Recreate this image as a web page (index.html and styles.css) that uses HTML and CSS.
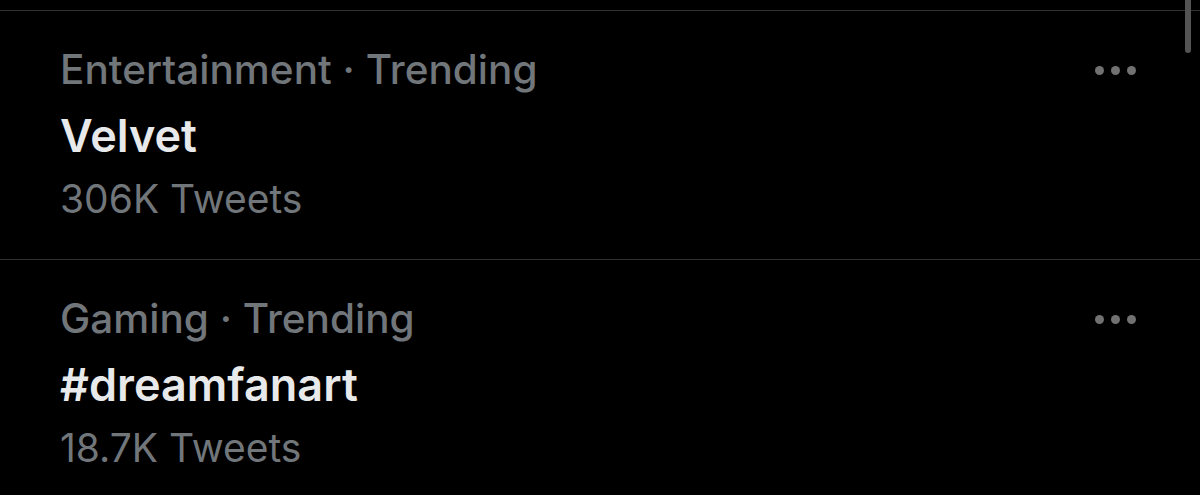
FILE: index.html
```html
<!DOCTYPE html>
<html>
<head>
<meta charset="utf-8">
<link rel="stylesheet" href="styles.css">
</head>
<body>
<div class="list">
  <div class="top-edge"></div>
  <div class="trend">
    <div class="info">
      <div class="meta">Entertainment · Trending</div>
      <div class="title">Velvet</div>
      <div class="count">306K Tweets</div>
    </div>
    <div class="more"><span></span><span></span><span></span></div>
  </div>
  <div class="trend">
    <div class="info">
      <div class="meta">Gaming · Trending</div>
      <div class="title">#dreamfanart</div>
      <div class="count">18.7K Tweets</div>
    </div>
    <div class="more"><span></span><span></span><span></span></div>
  </div>
  <div class="scrollbar"></div>
</div>
</body>
</html>
```
FILE: styles.css
```css
html, body {
  margin: 0;
  padding: 0;
  background: #000;
}
body {
  width: 1200px;
  height: 495px;
  overflow: hidden;
  font-family: Inter, "Noto Sans", sans-serif;
}
.list {
  position: relative;
  display: flex;
  flex-direction: column;
}
.top-edge {
  height: 10px;
  border-bottom: 1px solid #2f3336;
}
.trend {
  height: 248px;
  border-bottom: 1px solid #2f3336;
  display: flex;
  justify-content: space-between;
  align-items: flex-start;
  padding: 0 64px 0 60px;
}
.info {
  display: flex;
  flex-direction: column;
  padding-top: 29px;
}
.meta {
  color: #71767b;
  font-size: 40.5px;
  line-height: 60px;
  font-weight: 500;
}
.title {
  color: #e7e9ea;
  font-size: 45px;
  line-height: 71px;
  font-weight: 600;
}
.count {
  color: #71767b;
  font-size: 39px;
  line-height: 56px;
  font-weight: 400;
}
.more {
  display: flex;
  gap: 7px;
  margin-top: 55px;
}
.more span {
  width: 9px;
  height: 9px;
  border-radius: 50%;
  background: #717171;
}
.scrollbar {
  position: absolute;
  top: 0;
  right: 9px;
  width: 6px;
  height: 53px;
  border-radius: 0 0 3px 3px;
  background: #545454;
}
```
